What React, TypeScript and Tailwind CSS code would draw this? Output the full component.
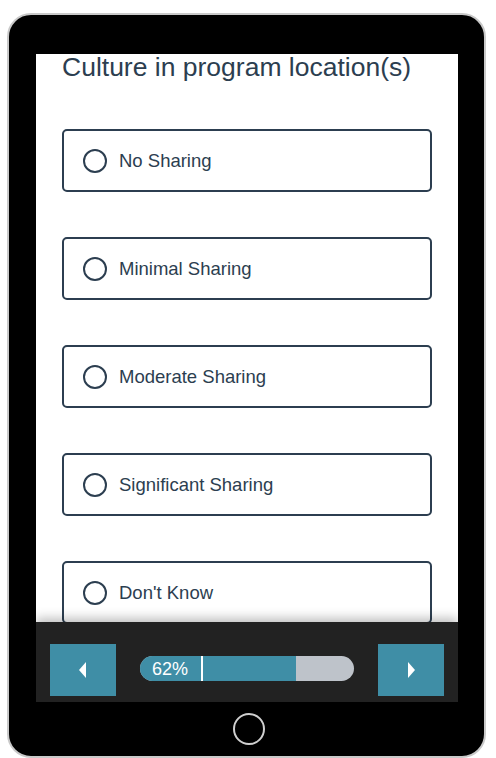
const options = [
  "No Sharing",
  "Minimal Sharing",
  "Moderate Sharing",
  "Significant Sharing",
  "Don't Know",
];

function Option({ label }: { label: string }) {
  return (
    <label className="flex h-[63px] shrink-0 cursor-pointer items-center rounded-[5px] border-2 border-[#2c3e50] bg-white pl-[19px]">
      <span className="h-6 w-6 shrink-0 rounded-full border-2 border-[#2c3e50]" />
      <span className="ml-3 text-[18.5px] leading-6 text-[#2c3e50]">{label}</span>
    </label>
  );
}

export default function App() {
  return (
    <div className="min-h-screen bg-white pl-[7px] pt-[13px] font-['Liberation_Sans',Arial,sans-serif]">
      <div className="flex h-[745px] w-[479px] flex-col rounded-[24px] border-2 border-[#c9c9c9] bg-black">
        {/* Screen */}
        <div className="ml-[27px] mt-[39px] flex h-[648px] w-[422px] flex-col bg-white">
          <div className="flex h-[568px] flex-col overflow-hidden px-[26px]">
            <h1 className="text-[26.5px] leading-[26px] text-[#2c3e50]">Culture in program location(s)</h1>
            <div className="mt-[49px] flex flex-col gap-[45px]">
              {options.map((o) => (
                <Option key={o} label={o} />
              ))}
            </div>
          </div>

          {/* Footer nav */}
          <div className="relative flex h-[80px] items-start bg-[#222] px-[14px] pt-[22px] shadow-[0_-4px_10px_rgba(0,0,0,0.25)]">
            <button className="flex h-[52px] w-[66px] items-center justify-center bg-[#3f8ea6]">
              <svg width="10" height="16" viewBox="0 0 10 16">
                <path d="M8 0 L1 8 L8 16 Z" fill="white" />
              </svg>
            </button>
            <div className="mx-6 mt-3 flex h-[25px] flex-1 overflow-hidden rounded-full bg-[#bec3ca]">
              <div className="flex h-full w-[156px] items-center bg-[#3f8ea6]">
                <span className="w-[61px] pl-3 text-[18px] leading-none text-white">62%</span>
                <span className="h-full w-[2px] bg-white" />
              </div>
            </div>
            <button className="flex h-[52px] w-[66px] items-center justify-center bg-[#3f8ea6]">
              <svg width="10" height="16" viewBox="0 0 10 16">
                <path d="M2 0 L9 8 L2 16 Z" fill="white" />
              </svg>
            </button>
          </div>
        </div>

        {/* Home button */}
        <div className="flex flex-1 items-center justify-center pl-[4px]">
          <div className="h-8 w-8 rounded-full border-2 border-[#cfcfcf]" />
        </div>
      </div>
    </div>
  );
}
